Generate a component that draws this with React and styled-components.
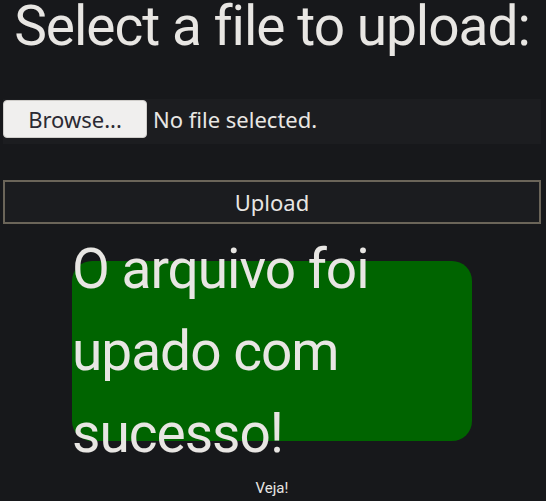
import React from "react";
import styled, { createGlobalStyle } from "styled-components";

const Global = createGlobalStyle`
  html, body { margin: 0; padding: 0; background: #17181b; }
  body {
    color: #e8e6e3;
    font-family: Roboto, "Noto Sans", sans-serif;
  }
`;

const Page = styled.div`
  padding: 0 5px 0 3px;
  display: flex;
  flex-direction: column;
`;

const Title = styled.h1`
  margin: 0;
  padding-top: 2px;
  font-size: 55px;
  font-weight: 400;
  letter-spacing: -1px;
  line-height: 48px;
  text-align: center;
`;

const FileRow = styled.div`
  margin-top: 49px;
  display: flex;
  align-items: center;
  gap: 6px;
  padding: 1px 0 6px 0;
  background: #1c1d20;
`;

const BrowseButton = styled.button`
  width: 144px;
  height: 38px;
  border: 1px solid #cfcdca;
  border-radius: 4px;
  background: #f0efee;
  color: #2b2a33;
  font-family: "Noto Sans", sans-serif;
  font-size: 22px;
  line-height: 36px;
  padding: 0;
`;

const FileLabel = styled.span`
  font-family: "Noto Sans", sans-serif;
  font-size: 22px;
`;

const UploadButton = styled.button`
  margin-top: 36px;
  height: 44px;
  border: 2px solid #6b6559;
  background: #1b1c1f;
  color: #e8e6e3;
  font-family: "Noto Sans", sans-serif;
  font-size: 22px;
`;

const SuccessBox = styled.div`
  margin: 37px auto 0;
  width: 400px;
  height: 180px;
  border-radius: 20px;
  background: #006400;
  display: flex;
  align-items: center;
`;

const SuccessText = styled.p`
  margin: 0;
  font-size: 55px;
  letter-spacing: -1px;
  line-height: 82px;
`;

const Footer = styled.div`
  margin-top: 39px;
  text-align: center;
  font-size: 15px;
  line-height: 16px;
`;

export default function App() {
  return (
    <>
      <Global />
      <Page>
        <Title>Select a file to upload:</Title>
        <FileRow>
          <BrowseButton type="button">Browse...</BrowseButton>
          <FileLabel>No file selected.</FileLabel>
        </FileRow>
        <UploadButton type="button">Upload</UploadButton>
        <SuccessBox>
          <SuccessText>O arquivo foi upado com sucesso!</SuccessText>
        </SuccessBox>
        <Footer>Veja!</Footer>
      </Page>
    </>
  );
}
